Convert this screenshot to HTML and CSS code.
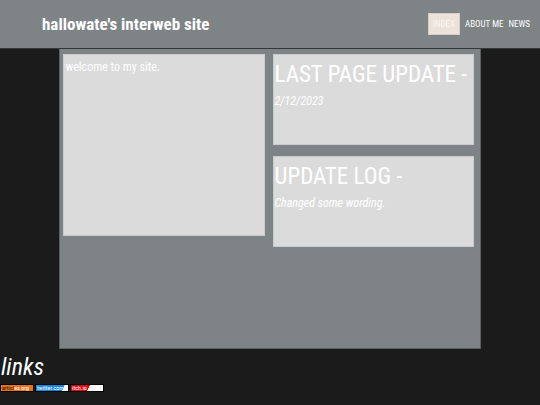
FILE: index.html
```html
<!DOCTYPE html>
<html lang="en">
<head>
<meta charset="utf-8">
<meta name="viewport" content="width=device-width, initial-scale=1">
<title>hallowate's interweb site</title>
<link rel="stylesheet" href="styles.css">
</head>
<body>
<header class="site-header">
  <h1 class="site-title">hallowate's interweb site</h1>
  <nav class="site-nav">
    <a class="nav-link current" href="#index">INDEX</a>
    <a class="nav-link" href="#about">ABOUT ME</a>
    <a class="nav-link" href="#news">NEWS</a>
  </nav>
</header>
<main class="content">
  <section class="card welcome">
    <p class="text">welcome to my site.</p>
  </section>
  <div class="column">
    <section class="card">
      <h2 class="card-title">LAST PAGE UPDATE -</h2>
      <p class="text note">2/12/2023</p>
    </section>
    <section class="card">
      <h2 class="card-title">UPDATE LOG -</h2>
      <p class="text note">Changed some wording.</p>
    </section>
  </div>
</main>
<footer class="links">
  <h2 class="links-title">links</h2>
  <div class="badges">
    <a class="badge orange" href="#articles"><span class="dark">articl</span>es.org</a>
    <a class="badge blue" href="#twitter">twitter.com</a>
    <a class="badge red" href="#itch">itch.io</a>
  </div>
</footer>
</body>
</html>
```
FILE: styles.css
```css
* {
  box-sizing: border-box;
}

body {
  margin: 0;
  min-height: 100vh;
  background: #1b1b1b;
  color: #fff;
  font-family: "Roboto Condensed", Roboto, sans-serif;
}

h1, h2, p {
  margin: 0;
  font-weight: 400;
}

a {
  color: inherit;
  text-decoration: none;
}

.site-header {
  display: flex;
  align-items: center;
  justify-content: space-between;
  height: 49px;
  padding: 0 10px 0 42px;
  background: #7e8486;
  border-bottom: 1px solid #343838;
}

.site-title {
  font-size: 17px;
  line-height: 24px;
  font-weight: 700;
}

.site-nav {
  display: flex;
  align-items: center;
  gap: 5px;
  font-size: 9px;
  line-height: 20px;
}

.current {
  padding: 0 4px;
  background: #ebe2d9;
  border: 1px solid #d5cfc9;
  color: #faf6f2;
}

.content {
  display: grid;
  grid-template-columns: repeat(2, minmax(0, 1fr));
  align-items: start;
  gap: 8px;
  width: 78%;
  min-height: 300px;
  margin: 0 auto;
  padding: 5px 6px 0 3px;
  background: #7e8486;
  border: 1px solid #5b6061;
  border-top: 0;
}

.column {
  display: grid;
  gap: 11px;
}

.card {
  min-height: 91px;
  padding: 2px 1px;
  background: #dbdbdb;
  border: 1px solid #c9cccc;
}

.welcome {
  min-height: 182px;
}

.text {
  font-size: 12px;
  line-height: 20px;
}

.card-title {
  font-size: 23px;
  line-height: 36px;
  white-space: nowrap;
}

.note {
  line-height: 16px;
  font-style: italic;
}

.links-title {
  padding: 2px 1px 0;
  font-size: 24px;
  line-height: 32px;
  font-style: italic;
}

.badges {
  display: flex;
  gap: 1px;
  padding-top: 1px;
  font-size: 6px;
  line-height: 6px;
}

.badge {
  width: 34px;
  height: 8px;
  padding: 0 1px;
  border: 1px solid #000;
  overflow: hidden;
  white-space: nowrap;
}

.orange {
  background: #e8731c;
}

.dark {
  color: #241000;
}

.blue {
  background: linear-gradient(115deg, #1687e0 82%, #fff 83%);
}

.red {
  background: linear-gradient(115deg, #dd0910 54%, #fff 55%);
}
```
